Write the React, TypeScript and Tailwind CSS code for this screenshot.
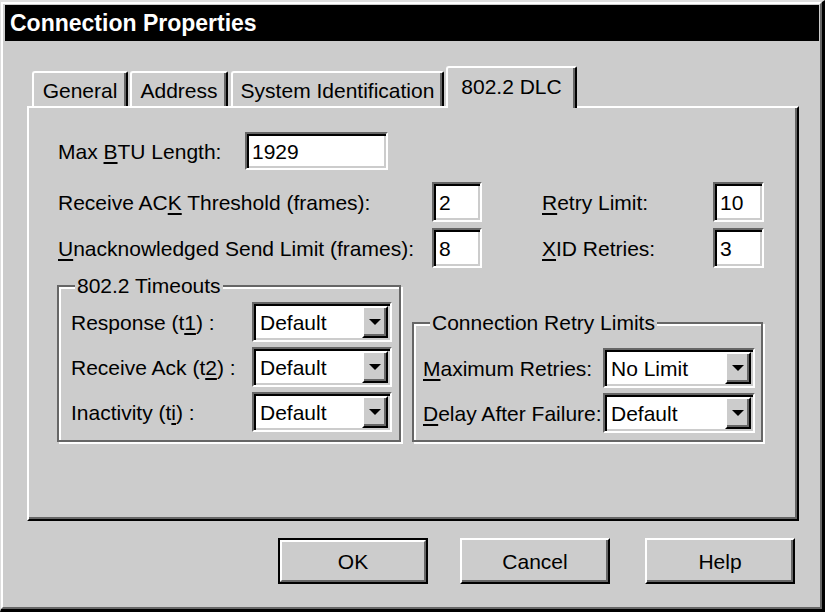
import type { ReactNode } from "react";

const Key = ({ children }: { children: ReactNode }) => (
  <span className="underline decoration-2 underline-offset-[3px]">{children}</span>
);

const TextBox = ({ value, className }: { value: string; className: string }) => (
  <div
    className={`flex items-center bg-white pl-[5px] border-2 border-t-[#666] border-l-[#666] border-r-white border-b-white shadow-[inset_2px_2px_0_#000,inset_-2px_-2px_0_#ccc] ${className}`}
  >
    {value}
  </div>
);

const ComboBox = ({ value, className }: { value: string; className: string }) => (
  <div
    className={`flex bg-white p-[2px] border-2 border-t-[#666] border-l-[#666] border-r-white border-b-white shadow-[inset_2px_2px_0_#000,inset_-2px_-2px_0_#ccc] ${className}`}
  >
    <div className="flex-1 flex items-center pl-[4px]">{value}</div>
    <div className="w-[26px] h-full flex items-center justify-center bg-[#ccc] border-2 border-t-white border-l-white border-r-black border-b-black shadow-[inset_-2px_-2px_0_#666]">
      <svg width="12" height="6" viewBox="0 0 12 6" className="mr-px mb-px">
        <polygon points="0,0 12,0 6,6" fill="#000" />
      </svg>
    </div>
  </div>
);

const GroupBox = ({
  title,
  className,
  children,
}: {
  title: string;
  className: string;
  children: ReactNode;
}) => (
  <div
    className={`relative border-2 border-[#666] shadow-[inset_2px_2px_0_#fff,2px_2px_0_#fff] ${className}`}
  >
    <span className="absolute -top-[12px] left-[16px] bg-[#ccc] px-[2px] leading-[22px]">
      {title}
    </span>
    {children}
  </div>
);

const Tab = ({
  label,
  className,
  active,
}: {
  label: string;
  className: string;
  active?: boolean;
}) => (
  <div
    className={`flex items-center justify-center bg-[#ccc] rounded-tl-[3px] rounded-tr-[2px] border-t-2 border-l-2 border-r-2 border-t-white border-l-white border-r-black shadow-[inset_-2px_0_0_#666] ${
      active ? "h-[42px] -mb-[2px] relative z-10 pb-[4px]" : "h-[35px] pt-[2px]"
    } ${className}`}
  >
    {label}
  </div>
);

const Button = ({
  label,
  className,
  isDefault,
}: {
  label: string;
  className?: string;
  isDefault?: boolean;
}) =>
  isDefault ? (
    <div className={`w-[150px] h-[46px] border-2 border-black ${className ?? ""}`}>
      <div className="w-full h-full flex items-center justify-center border-2 border-t-white border-l-white border-r-[#666] border-b-[#666]">
        {label}
      </div>
    </div>
  ) : (
    <div
      className={`w-[150px] h-[46px] flex items-center justify-center border-2 border-t-white border-l-white border-r-black border-b-black shadow-[inset_-2px_-2px_0_#666] ${className ?? ""}`}
    >
      {label}
    </div>
  );

export default function App() {
  return (
    <div className="w-[825px] h-[612px] bg-[#ccc] border-l border-t-2 border-r-[3px] border-b-[3px] border-l-[#ddd] border-t-[#ddd] border-r-black border-b-black font-['Liberation_Sans',Arial,sans-serif] text-[21px] text-black leading-none">
      <div className="h-full flex flex-col border-2 border-t-white border-l-white border-r-[#666] border-b-[#666] pl-[2px] pt-px pr-px">
        <div className="h-[36px] shrink-0 bg-black flex items-center pl-[5px] text-white font-bold text-[23px]">
          Connection Properties
        </div>

        <div className="ml-[22px] w-[772px] mt-[25px]">
          <div className="flex items-end h-[40px] pl-[5px]">
            <Tab label="General" className="w-[96px]" />
            <Tab label="Address" className="w-[98px] ml-[2px]" />
            <Tab label="System Identification" className="w-[213px] ml-[3px]" />
            <Tab label="802.2 DLC" className="w-[131px] ml-[2px]" active />
          </div>

          <div className="h-[415px] border-2 border-t-white border-l-white border-r-black border-b-black shadow-[inset_-2px_-2px_0_#666] pl-[29px] pt-[24px]">
            <div className="flex items-center h-[38px]">
              <div className="w-[187px]">
                Max <Key>B</Key>TU Length:
              </div>
              <TextBox value="1929" className="w-[143px] h-[38px]" />
            </div>

            <div className="flex items-center mt-[12px]">
              <div className="w-[374px]">
                Receive AC<Key>K</Key> Threshold (frames):
              </div>
              <TextBox value="2" className="w-[50px] h-[40px]" />
              <div className="ml-[60px] w-[171px]">
                <Key>R</Key>etry Limit:
              </div>
              <TextBox value="10" className="w-[51px] h-[40px]" />
            </div>

            <div className="flex items-center mt-[6px]">
              <div className="w-[374px]">
                <Key>U</Key>nacknowledged Send Limit (frames):
              </div>
              <TextBox value="8" className="w-[50px] h-[40px]" />
              <div className="ml-[60px] w-[171px]">
                <Key>X</Key>ID Retries:
              </div>
              <TextBox value="3" className="w-[51px] h-[40px]" />
            </div>

            <div className="flex items-start mt-[17px] -ml-px">
              <GroupBox title="802.2 Timeouts" className="w-[344px] h-[157px] pt-[15px] pl-[12px]">
                <div className="flex flex-col gap-[5px]">
                  <div className="flex items-center">
                    <div className="w-[181px]">
                      Response (t<Key>1</Key>) :
                    </div>
                    <ComboBox value="Default" className="w-[140px] h-[40px]" />
                  </div>
                  <div className="flex items-center">
                    <div className="w-[181px]">
                      Receive Ack (t<Key>2</Key>) :
                    </div>
                    <ComboBox value="Default" className="w-[140px] h-[40px]" />
                  </div>
                  <div className="flex items-center">
                    <div className="w-[181px]">
                      Inactivity (t<Key>i</Key>) :
                    </div>
                    <ComboBox value="Default" className="w-[140px] h-[40px]" />
                  </div>
                </div>
              </GroupBox>

              <GroupBox
                title="Connection Retry Limits"
                className="ml-[11px] mt-[37px] w-[351px] h-[120px] pt-[24px] pl-[9px]"
              >
                <div className="flex flex-col gap-[5px]">
                  <div className="flex items-center">
                    <div className="w-[180px]">
                      <Key>M</Key>aximum Retries:
                    </div>
                    <ComboBox value="No Limit" className="w-[152px] h-[40px]" />
                  </div>
                  <div className="flex items-center">
                    <div className="w-[180px]">
                      <Key>D</Key>elay After Failure:
                    </div>
                    <ComboBox value="Default" className="w-[152px] h-[40px]" />
                  </div>
                </div>
              </GroupBox>
            </div>
          </div>
        </div>

        <div className="flex justify-end pr-[24px] mt-[17px]">
          <Button label="OK" isDefault />
          <Button label="Cancel" className="ml-[32px]" />
          <Button label="Help" className="ml-[35px]" />
        </div>
      </div>
    </div>
  );
}
